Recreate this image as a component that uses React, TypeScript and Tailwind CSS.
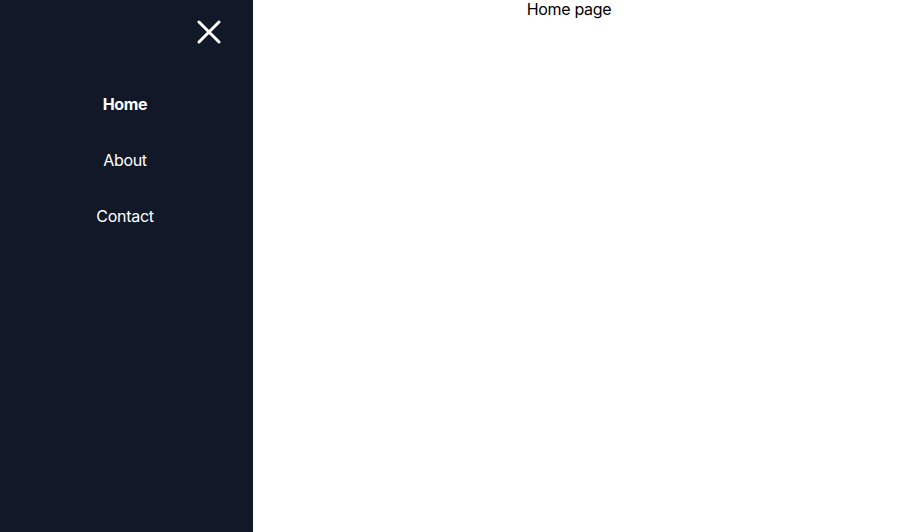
export default function App() {
  return (
    <div className="flex h-[532px] w-full bg-white font-['Inter',sans-serif] text-base tracking-[-0.3px]">
      <aside className="flex w-[253px] shrink-0 flex-col bg-[#111827] text-white">
        <div className="flex justify-end pr-[32px] pt-[20px]">
          <svg width="24" height="24" viewBox="0 0 24 24" fill="none" stroke="white" strokeWidth="3" strokeLinecap="round">
            <path d="M2 2L22 22M22 2L2 22" />
          </svg>
        </div>
        <nav className="mt-[48px] flex flex-col items-center gap-[32px] pr-[3px]">
          <a className="font-bold leading-6">Home</a>
          <a className="leading-6">About</a>
          <a className="leading-6">Contact</a>
        </nav>
      </aside>
      <main className="flex-1 pr-[36px] text-center text-black">
        <p className="leading-[19px]">Home page</p>
      </main>
    </div>
  );
}
